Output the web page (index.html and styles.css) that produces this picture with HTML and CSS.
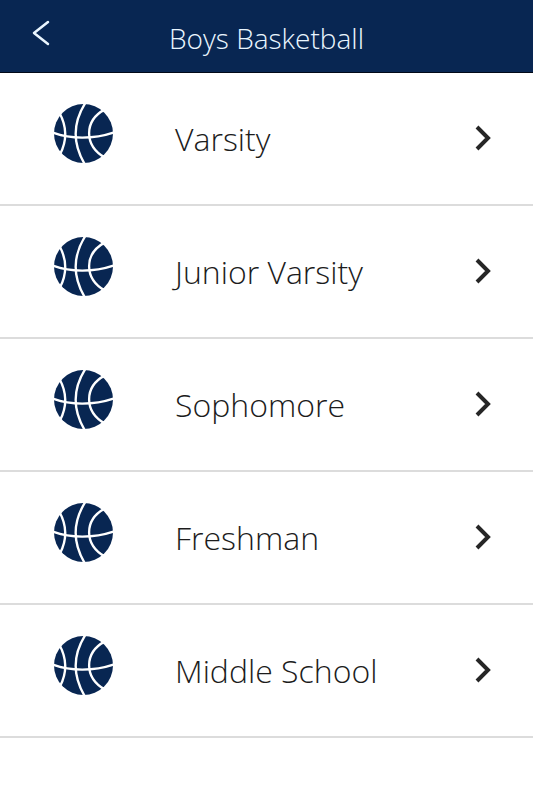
FILE: index.html
```html
<!DOCTYPE html>
<html lang="en">
<head>
<meta charset="utf-8">
<meta name="viewport" content="width=device-width, initial-scale=1">
<title>Boys Basketball</title>
<link rel="stylesheet" href="styles.css">
</head>
<body>
<svg width="0" height="0" class="sprite" aria-hidden="true">
  <symbol id="ball" viewBox="32 34 176 176">
    <circle cx="120" cy="122" r="88" fill="#082652"/>
    <g fill="none" stroke="#fff" stroke-width="7">
      <path d="M48 60Q82 122 50 184"/>
      <path d="M126 30C89 88 87 152 124 214"/>
      <path d="M184 50C121 84 121 158 184 194"/>
      <path d="M30 120C80 139 152 139 210 119"/>
    </g>
  </symbol>
  <symbol id="chevron" viewBox="0 0 16 26">
    <path d="M2 2l11 11L2 24" fill="none" stroke="#262626" stroke-width="4"/>
  </symbol>
</svg>
<header class="bar">
  <button class="back" type="button" aria-label="Back">
    <svg viewBox="0 0 18 26" width="18" height="26" aria-hidden="true"><path d="M16 2L2 13L16 24" fill="none" stroke="#eaf6ff" stroke-width="2.500" stroke-linecap="round" stroke-linejoin="round"/></svg>
  </button>
  <h1 class="title">Boys Basketball</h1>
</header>
<main>
  <ul class="teams">
    <li><a class="team" href="#varsity"><svg class="ball" aria-hidden="true"><use href="#ball"/></svg><span class="name">Varsity</span><svg class="chevron" aria-hidden="true"><use href="#chevron"/></svg></a></li>
    <li><a class="team" href="#junior-varsity"><svg class="ball" aria-hidden="true"><use href="#ball"/></svg><span class="name">Junior Varsity</span><svg class="chevron" aria-hidden="true"><use href="#chevron"/></svg></a></li>
    <li><a class="team" href="#sophomore"><svg class="ball" aria-hidden="true"><use href="#ball"/></svg><span class="name">Sophomore</span><svg class="chevron" aria-hidden="true"><use href="#chevron"/></svg></a></li>
    <li><a class="team" href="#freshman"><svg class="ball" aria-hidden="true"><use href="#ball"/></svg><span class="name">Freshman</span><svg class="chevron" aria-hidden="true"><use href="#chevron"/></svg></a></li>
    <li><a class="team" href="#middle-school"><svg class="ball" aria-hidden="true"><use href="#ball"/></svg><span class="name">Middle School</span><svg class="chevron" aria-hidden="true"><use href="#chevron"/></svg></a></li>
  </ul>
</main>
</body>
</html>
```
FILE: styles.css
```css
* {
  box-sizing: border-box;
}

body {
  margin: 0;
  background: #fff;
  color: #1c1c1c;
  font-family: "Segoe UI", "Open Sans", "Noto Sans", sans-serif;
  font-weight: 300;
}

.sprite {
  display: block;
}

.bar {
  display: grid;
  grid-template-columns: 60px 1fr 60px;
  padding-top: 16px;
  height: 73px;
  background: #082652;
  border-bottom: 1px solid #020a18;
}

.back {
  display: flex;
  align-items: flex-start;
  justify-content: flex-end;
  padding: 4px 10px 0 0;
  border: 0;
  background: none;
}

.title {
  margin: 0;
  color: #eaf6ff;
  font-size: 28px;
  font-weight: 300;
  line-height: 44px;
  text-align: center;
}

.teams {
  margin: 0;
  padding: 0;
  list-style: none;
}

.team {
  display: grid;
  grid-template-columns: 59px 1fr 16px;
  column-gap: 62px;
  align-items: start;
  padding: 31px 42px 0 54px;
  height: 133px;
  border-bottom: 2px solid #dcdcdc;
  color: inherit;
  text-decoration: none;
}

.ball {
  width: 59px;
  height: 59px;
}

.name {
  padding-top: 11px;
  font-size: 32px;
  line-height: 48px;
  white-space: nowrap;
}

.chevron {
  width: 16px;
  height: 26px;
  margin-top: 21px;
}
```
